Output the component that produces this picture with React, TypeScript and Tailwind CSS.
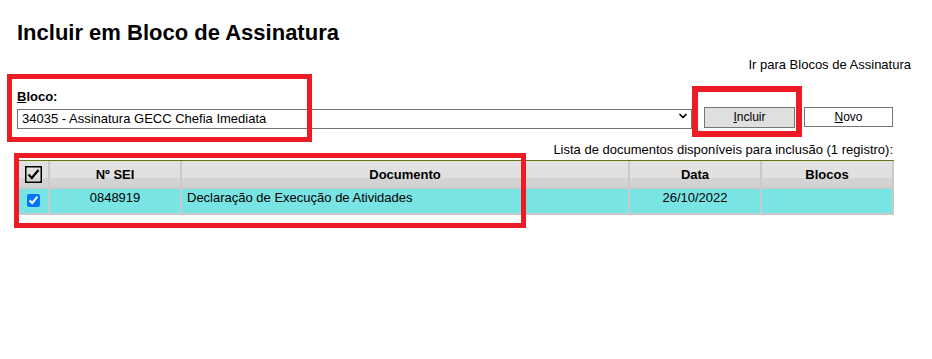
import { ChevronDown } from 'lucide-react'

type Doc = {
  sei: string
  documento: string
  data: string
  blocos: string
}

const docs: Doc[] = [
  { sei: '0848919', documento: 'Declaração de Execução de Atividades', data: '26/10/2022', blocos: '' },
]

const cols = 'grid grid-cols-[29px_130px_446px_130px_130px] gap-x-[2px]'

const HeaderCheck = () => (
  <svg width="17" height="17" viewBox="0 0 17 17">
    <rect x="0.75" y="0.75" width="15.5" height="15.5" fill="none" stroke="#000" strokeWidth="1.5" />
    <path d="M3.5 8.5 L6.8 12 L13.5 4" fill="none" stroke="#000" strokeWidth="2.2" />
  </svg>
)

const App = () => {
  return (
    <div className="relative min-h-[359px] bg-white text-black font-['Liberation_Sans',Arial,sans-serif]">
      <h1 className="pl-[17px] pt-[20px] text-[22px] leading-[25px] font-bold">
        Incluir em Bloco de Assinatura
      </h1>

      <div className="mt-[12px] pr-[21px] text-right text-[13px] leading-[15px]">
        Ir para Blocos de Assinatura
      </div>

      <div className="ml-[17px] w-[877px]">
        <div className="mt-[17px] flex items-start">
          <div className="flex w-[675px] flex-col">
            <label className="text-[13px] leading-[15px] font-bold">
              <span className="underline">B</span>loco:
            </label>
            <div className="relative mt-[2px]">
              <select
                defaultValue="34035"
                className="h-[20px] w-full appearance-none border border-[#767676] bg-white pl-[4px] text-[13px] leading-[18px] outline-none"
              >
                <option value="34035">34035 - Assinatura GECC Chefia Imediata</option>
              </select>
              <ChevronDown
                size={12}
                strokeWidth={3.5}
                className="pointer-events-none absolute right-[3px] top-[4px] text-black"
              />
            </div>
          </div>

          <div className="ml-[12px] mt-[18px] flex items-start gap-[9px]">
            <button className="h-[21px] w-[91px] border border-[#767676] bg-[#dfdfdf] text-[12px] leading-[19px]">
              <span className="underline">I</span>ncluir
            </button>
            <button className="h-[20px] w-[89px] border border-[#767676] bg-white text-[12px] leading-[18px]">
              <span className="underline">N</span>ovo
            </button>
          </div>
        </div>

        <div className="mt-[12px] pr-[1px] text-right text-[13px] leading-[15px]">
          Lista de documentos disponíveis para inclusão (1 registro):
        </div>

        <div className="mt-[3px] border-t border-[#5d7a12] bg-[#c9c9c9] px-[2px] pb-[2px]">
          <div className={`${cols} h-[26px] text-[13px] leading-[15px] font-bold`}>
            <div className="flex items-center justify-center bg-linear-to-b from-[#e1e1e1] from-65% to-[#d3d3d3] to-65%">
              <HeaderCheck />
            </div>
            <div className="flex items-center justify-center bg-linear-to-b from-[#e1e1e1] from-65% to-[#d3d3d3] to-65%">Nº SEI</div>
            <div className="flex items-center justify-center bg-linear-to-b from-[#e1e1e1] from-65% to-[#d3d3d3] to-65%">Documento</div>
            <div className="flex items-center justify-center bg-linear-to-b from-[#e1e1e1] from-65% to-[#d3d3d3] to-65%">Data</div>
            <div className="flex items-center justify-center bg-linear-to-b from-[#e1e1e1] from-65% to-[#d3d3d3] to-65%">Blocos</div>
          </div>

          {docs.map((doc) => (
            <div key={doc.sei} className={`${cols} mt-[2px] h-[24px] text-[13px] leading-[15px]`}>
              <div className="flex justify-center bg-[#79e4e4] pt-[5px]">
                <input type="checkbox" defaultChecked className="h-[13px] w-[13px]" />
              </div>
              <div className="bg-[#79e4e4] pt-[1px] text-center">{doc.sei}</div>
              <div className="bg-[#79e4e4] pl-[5px] pt-[1px]">{doc.documento}</div>
              <div className="bg-[#79e4e4] pt-[1px] text-center">{doc.data}</div>
              <div className="bg-[#79e4e4] pt-[1px] text-center">{doc.blocos}</div>
            </div>
          ))}
        </div>
      </div>

      {/* red annotation boxes */}
      <div className="pointer-events-none absolute left-[7px] top-[74px] h-[68px] w-[305px] border-[5px] border-[#ed1c24]" />
      <div className="pointer-events-none absolute left-[692px] top-[86px] h-[51px] w-[110px] border-[6px] border-[#ed1c24]" />
      <div className="pointer-events-none absolute left-[14px] top-[153px] h-[75px] w-[512px] border-[5px] border-[#ed1c24]" />
    </div>
  )
}

export default App
